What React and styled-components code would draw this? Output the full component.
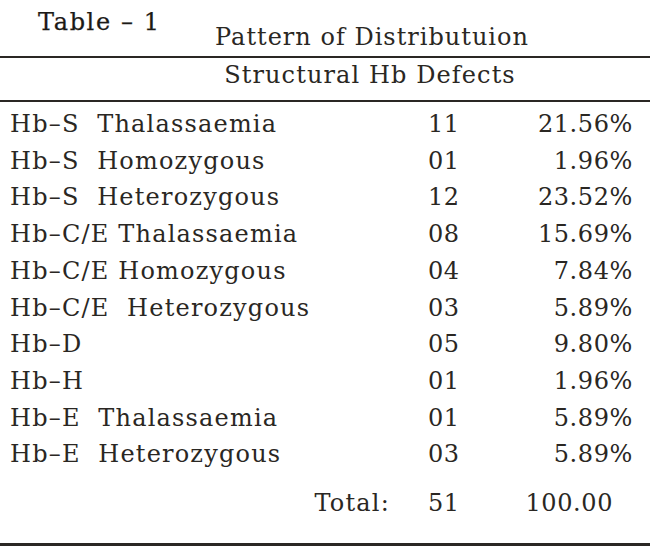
import React from "react"
import styled, { createGlobalStyle } from "styled-components"

const rows = [
    { label: "Hb–S  Thalassaemia", count: "11", pct: "21.56%" },
    { label: "Hb–S  Homozygous", count: "01", pct: "1.96%" },
    { label: "Hb–S  Heterozygous", count: "12", pct: "23.52%" },
    { label: "Hb–C/E Thalassaemia", count: "08", pct: "15.69%" },
    { label: "Hb–C/E Homozygous", count: "04", pct: "7.84%" },
    { label: "Hb–C/E  Heterozygous", count: "03", pct: "5.89%" },
    { label: "Hb–D", count: "05", pct: "9.80%" },
    { label: "Hb–H", count: "01", pct: "1.96%" },
    { label: "Hb–E  Thalassaemia", count: "01", pct: "5.89%" },
    { label: "Hb–E  Heterozygous", count: "03", pct: "5.89%" },
]

function App() {
    return (
        <Page>
            <GlobalStyle />
            <Header>
                <TableNo>Table – 1</TableNo>
                <Caption>Pattern of Distributuion</Caption>
            </Header>
            <SubHeader>Structural Hb Defects</SubHeader>
            <Body>
                {rows.map((row, index) =>
                    <Row key={index}>
                        <Label>{row.label}</Label>
                        <Count>{row.count}</Count>
                        <Pct>{row.pct}</Pct>
                    </Row>
                )}
            </Body>
            <TotalRow>
                <Label $right>Total:</Label>
                <Count>51</Count>
                <Pct $total>100.00</Pct>
            </TotalRow>
        </Page>
    )
}

export default App;

const GlobalStyle = createGlobalStyle`
    html, body {
        margin: 0;
        padding: 0;
        background: #ffffff;
    }
`
const Page = styled.div`
    width: 650px;
    height: 554px;
    background: #ffffff;
    color: #2a2723;
    font-family: "DejaVu Serif", "Liberation Serif", serif;
    overflow: hidden;
`
const Header = styled.div`
    display: flex;
    align-items: flex-start;
    height: 56px;
    border-bottom: 2px solid #2a2724;
`
const TableNo = styled.span`
    font-size: 24px;
    line-height: 30px;
    letter-spacing: 1.6px;
    padding: 7px 0 0 38px;
    width: 177px;
    color: #1c1a17;
    -webkit-text-stroke: 0.25px #1c1a17;
`
const Caption = styled.span`
    font-size: 24px;
    line-height: 30px;
    letter-spacing: 1px;
    padding-top: 22px;
`
const SubHeader = styled.div`
    font-size: 24px;
    line-height: 32px;
    letter-spacing: 1.1px;
    text-align: center;
    padding: 1px 0 9px 90px;
    border-bottom: 2px solid #2a2724;
`
const Body = styled.div`
    padding-top: 4px;
`
const Row = styled.div`
    display: grid;
    grid-template-columns: 418px 90px 1fr;
    padding: 0 17px 0 10px;
    font-size: 24px;
    line-height: 36.7px;
    letter-spacing: 1.2px;
    white-space: pre;
`
const TotalRow = styled(Row)`
    margin-top: 12px;
    padding-bottom: 21px;
    border-bottom: 3px solid #2a2724;
`
const Label = styled.span`
    text-align: ${p => p.$right ? "right" : "left"};
    padding-right: ${p => p.$right ? "38px" : "0"};
`
const Count = styled.span`
    letter-spacing: 0.6px;
`
const Pct = styled.span`
    text-align: right;
    letter-spacing: 0.6px;
    padding-right: ${p => p.$total ? "20px" : "0"};
`
